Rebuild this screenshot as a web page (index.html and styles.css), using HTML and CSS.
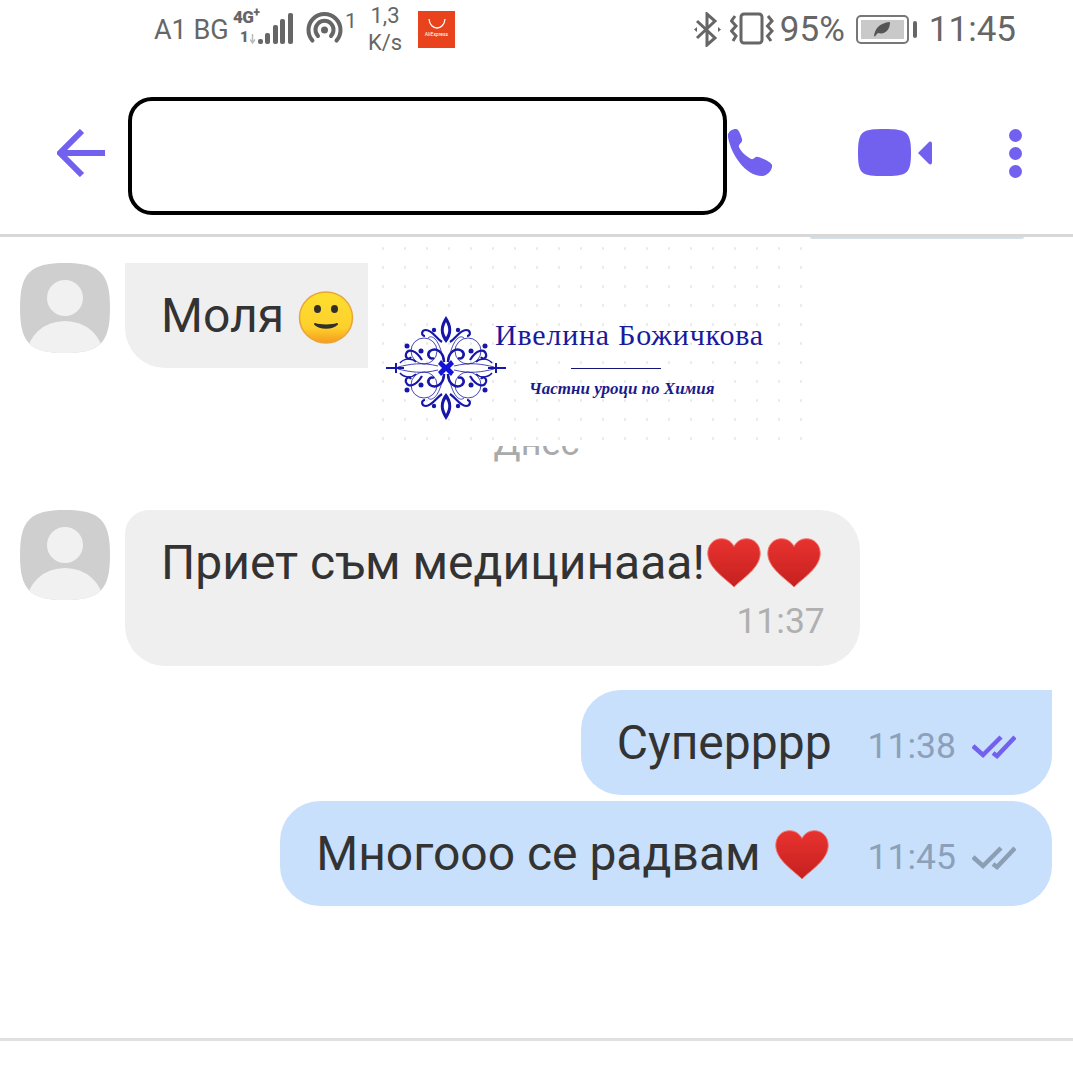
FILE: index.html
```html
<!DOCTYPE html>
<html lang="bg">
<head>
    <meta charset="UTF-8">
    <meta name="viewport" content="width=device-width, initial-scale=1.0">
    <title>Chat</title>
    <link rel="stylesheet" href="styles.css">
</head>
<body>
    <svg class="defs" width="0" height="0">
        <defs>
            <linearGradient id="heartFill" x1="0" y1="0" x2="0" y2="1">
                <stop offset="0" stop-color="#e8332f"/>
                <stop offset="1" stop-color="#c5201f"/>
            </linearGradient>
            <linearGradient id="smileFill" x1="0" y1="0" x2="0" y2="1">
                <stop offset="0" stop-color="#fde02f"/>
                <stop offset="0.7" stop-color="#fdd02c"/>
                <stop offset="1" stop-color="#f79a1f"/>
            </linearGradient>
            <symbol id="heart" viewBox="0 0 54 50">
                <path d="M27 49C18 40 1 30 .8 15.500C.7 6.500 7 .7 14.500.7C20 .7 24.500 3.500 27 8.500C29.500 3.500 34 .7 39.500.7C47 .7 53.300 6.500 53.200 15.500C53 30 36 40 27 49Z" fill="url(#heartFill)" stroke="#f2746c" stroke-width="1"/>
            </symbol>
            <symbol id="ticks" viewBox="0 0 44 24">
                <path d="M1 11L11 20L29 2M21 18L25 21L43 2" fill="none" stroke="currentColor" stroke-width="4.500"/>
            </symbol>
            <symbol id="avatar" viewBox="0 0 90 90">
                <clipPath id="avatarClip">
                    <path d="M45 0C80 0 90 10 90 45S80 90 45 90S0 80 0 45S10 0 45 0Z"/>
                </clipPath>
                <g clip-path="url(#avatarClip)">
                    <rect width="90" height="90" fill="#cfcfcf"/>
                    <circle cx="45" cy="35" r="18" fill="#f1f1f1"/>
                    <ellipse cx="45" cy="92" rx="38" ry="34" fill="#f1f1f1"/>
                </g>
            </symbol>
            <g id="scrolls" fill="none" stroke="#1616a8">
                <path d="M2 -6C2 -16 10 -21 16 -17C20 -13 16 -8 12 -10" stroke-width="2.500"/>
                <circle cx="22" cy="-17" r="13" stroke-width=".8"/>
                <path d="M3 -8C6 -28 14 -34 18 -30" stroke-width=".8"/>
                <path d="M4 -26C10 -30 14 -38 20 -38C25 -38 25 -32 21 -32" stroke-width="2.200"/>
                <path d="M24 -8C30 -18 38 -20 40 -14C41 -10 37 -8 35 -11" stroke-width="2.200"/>
                <path d="M8 -2C24 -6 36 -4 48 -1" stroke-width=".8"/>
                <path d="M30 -6C34 -10 42 -10 46 -5" stroke-width="1.500"/>
                <circle cx="12" cy="-38" r="2.200" fill="#1616a8" stroke="none"/>
                <circle cx="39" cy="-22" r="2.500" fill="#1616a8" stroke="none"/>
                <circle cx="25" cy="-17" r="2.500" fill="#1616a8" stroke="none"/>
            </g>
        </defs>
    </svg>

    <div class="status-bar">
        <div class="status-group">
            <span class="carrier">A1 BG</span>
            <div class="signal">
                <span class="net-type">4G<sup>+</sup></span>
                <span class="sim-no">1</span>
                <svg class="signal-bars" width="43" height="32" viewBox="0 0 43 32">
                    <path d="M2.500 21V29M0 26.500L2.500 30L5 26.500" fill="none" stroke="#bbb" stroke-width="1.500"/>
                    <rect x="8" y="26" width="5" height="5" rx="2" fill="#666"/>
                    <rect x="15" y="20" width="5" height="11" rx="2" fill="#666"/>
                    <rect x="23" y="12" width="5" height="19" rx="2" fill="#666"/>
                    <rect x="30" y="6" width="5" height="25" rx="2" fill="#666"/>
                    <rect x="38" y="0" width="5" height="31" rx="2" fill="#666"/>
                </svg>
            </div>
            <svg class="hotspot" width="37" height="32" viewBox="0 0 37 32">
                <circle cx="18.500" cy="18" r="3.500" fill="#666"/>
                <path d="M12 24A9 9 0 1 1 25 24M6.500 28.600A16 16 0 1 1 30.500 28.600" fill="none" stroke="#666" stroke-width="4" stroke-linecap="round"/>
            </svg>
            <span class="hotspot-count">1</span>
            <span class="speed">1,3<br>K/s</span>
            <div class="ali-icon">
                <svg width="20" height="12" viewBox="0 0 20 12">
                    <path d="M2 1C3 13 17 13 18 1" fill="none" stroke="#fff" stroke-width="1.300"/>
                </svg>
                <span class="ali-name">AliExpress</span>
            </div>
        </div>
        <div class="status-group status-right">
            <svg class="bluetooth" width="27" height="35" viewBox="0 0 27 35">
                <path d="M3 9L21 26L13 33V2L21 9L3 26" fill="none" stroke="#666" stroke-width="3"/>
                <path d="M0 17.500L3 15V20ZM27 17.500L24 15V20Z" fill="#666"/>
            </svg>
            <svg class="vibrate" width="44" height="33" viewBox="0 0 44 33">
                <rect x="11" y="2" width="21" height="29" rx="3" fill="none" stroke="#666" stroke-width="3"/>
                <path d="M5 4L1.500 9L6 14L1.500 19L6 24L3 29M38 4L42 9L37.500 14L42 19L37.500 24L41 29" fill="none" stroke="#666" stroke-width="3"/>
            </svg>
            <span class="status-text battery-pct">95%</span>
            <div class="battery">
                <div class="battery-body">
                    <svg width="18" height="16" viewBox="0 0 18 16">
                        <path d="M1 15C2 8 6 2 17 1C17 9 12 14 5 12C4 13 3 14 2 15.500Z" fill="#555"/>
                    </svg>
                </div>
                <div class="battery-cap"></div>
            </div>
            <span class="status-text">11:45</span>
        </div>
    </div>

    <div class="toolbar">
        <svg class="back-icon" width="48" height="48" viewBox="0 0 48 48">
            <path d="M25 2L3 24L25 46M3 24H48" fill="none" stroke="#7260ee" stroke-width="6"/>
        </svg>
        <div class="name-box"></div>
        <svg class="call-icon" width="47" height="48" viewBox="0 0 47 48">
            <path d="M2 8C1 3 6 0 10 0C13 0 15 7 16 10C17 14 12 15 13 18C15 23 20 27 25 30C28 31 29 27 32 28C36 29 45 33 46 36C47 40 42 47 36 47C20 47 5 26 2 8Z" fill="#7260ee"/>
        </svg>
        <svg class="video-icon" width="74" height="48" viewBox="0 0 74 48">
            <path d="M26 0C48 0 53 2 53 24S48 47 26 47S0 46 0 24S4 0 26 0Z" fill="#7260ee"/>
            <path d="M60 24L71 13C73 12 74 13 74 15V33C74 35 73 36 71 35Z" fill="#7260ee"/>
        </svg>
        <div class="more-icon">
            <span class="dot"></span>
            <span class="dot"></span>
            <span class="dot"></span>
        </div>
    </div>

    <div class="chat">
        <div class="peek-bubble"></div>

        <div class="msg-row row-first">
            <svg class="avatar" width="90" height="90"><use href="#avatar"/></svg>
            <div class="bubble bubble-in bubble-first">
                <span class="msg-text">Моля</span>
                <svg class="smile" width="56" height="53" viewBox="0 0 56 53">
                    <ellipse cx="28" cy="26.500" rx="26.500" ry="25.500" fill="url(#smileFill)" stroke="#e9a53a" stroke-width="1.500"/>
                    <ellipse cx="19.500" cy="18" rx="3.500" ry="4" fill="#33302a"/>
                    <ellipse cx="36.500" cy="18" rx="3.500" ry="4" fill="#33302a"/>
                    <path d="M17 33C22 38 34 38 39 33C34 35 22 35 17 33Z" fill="#33302a" stroke="#33302a" stroke-width="2" stroke-linejoin="round"/>
                </svg>
            </div>
        </div>

        <div class="date-label">Днес</div>

        <div class="msg-row">
            <svg class="avatar" width="90" height="90"><use href="#avatar"/></svg>
            <div class="bubble bubble-in bubble-tall">
                <div class="bubble-line">
                    <span class="msg-text">Приет съм медицинааа!</span>
                    <svg class="heart" width="54" height="50"><use href="#heart"/></svg>
                    <svg class="heart heart-next" width="54" height="50"><use href="#heart"/></svg>
                </div>
                <div class="msg-time time-in">11:37</div>
            </div>
        </div>

        <div class="sent-row row-gap">
            <div class="bubble bubble-out corner-sharp-right">
                <span class="msg-text">Суперррр</span>
                <span class="msg-time time-out">11:38</span>
                <svg class="tick tick-read" width="44" height="24"><use href="#ticks"/></svg>
            </div>
        </div>

        <div class="sent-row">
            <div class="bubble bubble-out">
                <span class="msg-text">Многооо се радвам</span>
                <svg class="heart heart-inline" width="54" height="50"><use href="#heart"/></svg>
                <span class="msg-time time-out">11:45</span>
                <svg class="tick" width="44" height="24"><use href="#ticks"/></svg>
            </div>
        </div>

        <div class="logo-stamp">
            <svg class="logo-ornament" width="120" height="104" viewBox="-60 -52 120 104">
                <use href="#scrolls"/>
                <use href="#scrolls" transform="scale(-1,1)"/>
                <use href="#scrolls" transform="scale(1,-1)"/>
                <use href="#scrolls" transform="scale(-1,-1)"/>
                <path d="M0 -52C-7 -42 -7 -34 0 -25C7 -34 7 -42 0 -52ZM0 -46C-3 -40 -3 -36 0 -31C3 -36 3 -40 0 -46Z" fill="#1616a8" fill-rule="evenodd"/>
                <path d="M0 52C-7 42 -7 34 0 25C7 34 7 42 0 52ZM0 46C-3 40 -3 36 0 31C3 36 3 40 0 46Z" fill="#1616a8" fill-rule="evenodd"/>
                <path d="M-60 0H-42M60 0H42M-50 -5V5M50 -5V5" fill="none" stroke="#1616a8" stroke-width="2"/>
                <path d="M0 -3L5 -8L8 -4L4 0L8 4L5 8L0 3L-5 8L-8 4L-4 0L-8 -4L-5 -8Z" fill="#1212d8"/>
            </svg>
            <div class="logo-name">Ивелина Божичкова</div>
            <div class="logo-rule"></div>
            <div class="logo-tagline">Частни уроци по Химия</div>
        </div>
    </div>

    <div class="composer"></div>
</body>
</html>
```

FILE: styles.css
```css
body {
    font-family: 'Roboto', sans-serif;
    margin: 0;
    padding: 0;
    background: #ffffff;
    color: #333;
    overflow: hidden;
}

.defs {
    position: absolute;
}

.status-bar {
    height: 60px;
    display: flex;
    justify-content: space-between;
    padding: 0 57px 0 154px;
    color: #666;
}

.status-group {
    display: flex;
    align-items: center;
}

.carrier {
    font-size: 27px;
    width: 79px;
    margin-bottom: 1px;
}

.signal {
    position: relative;
    width: 60px;
    height: 36px;
    margin-bottom: 2px;
}

.net-type {
    position: absolute;
    left: 0;
    top: -2px;
    font-size: 17px;
    font-weight: 900;
    letter-spacing: -0.5px;
    line-height: 17px;
}

.net-type sup {
    font-size: 12px;
    line-height: 0;
}

.sim-no {
    position: absolute;
    left: 7px;
    top: 18px;
    font-size: 15px;
    font-weight: 900;
    line-height: 17px;
}

.signal-bars {
    position: absolute;
    right: 0;
    top: 2px;
}

.hotspot {
    margin-left: 13px;
    margin-bottom: 4px;
}

.hotspot-count {
    font-size: 21px;
    width: 15px;
    margin: 0 0 18px 2px;
}

.speed {
    font-size: 22px;
    line-height: 27px;
    text-align: center;
    margin-left: 6px;
    width: 38px;
    margin-bottom: 3px;
}

.ali-icon {
    width: 37px;
    height: 37px;
    margin-left: 14px;
    margin-bottom: 1px;
    background: #e8431c;
    display: flex;
    flex-direction: column;
    align-items: center;
    padding-top: 7px;
    box-sizing: border-box;
}

.ali-name {
    font-size: 5px;
    color: #fff;
    line-height: 9px;
}

.bluetooth {
    margin-bottom: 2px;
}

.vibrate {
    margin: 0 6px 4px 9px;
}

.status-text {
    font-size: 35px;
    margin-bottom: 2px;
}

.battery-pct {
    margin-right: 11px;
}

.battery {
    display: flex;
    align-items: center;
    width: 61px;
    margin-right: 12px;
    margin-bottom: 2px;
}

.battery-body {
    width: 53px;
    height: 29px;
    border: 2px solid #777;
    border-radius: 5px;
    box-sizing: border-box;
    background: #c9c9c9;
    background-clip: content-box;
    padding: 3px;
    display: flex;
    align-items: center;
    justify-content: center;
}

.battery-cap {
    width: 4px;
    height: 17px;
    margin-left: 4px;
    background: #666;
    border-radius: 2px;
}

.toolbar {
    height: 174px;
    box-sizing: border-box;
    padding: 18px 49px 0 57px;
    display: flex;
    align-items: center;
}

.toolbar svg,
.more-icon {
    margin-bottom: 6px;
    flex-shrink: 0;
}

.name-box {
    width: 599px;
    height: 118px;
    margin-left: 23px;
    box-sizing: border-box;
    background: #fff;
    border: 4px solid #000;
    border-radius: 24px;
}

.call-icon {
    margin-left: -1px;
}

.video-icon {
    margin-left: 85px;
}

.more-icon {
    margin-left: 76px;
    width: 16px;
    display: flex;
    flex-direction: column;
    gap: 5px;
}

.dot {
    width: 13px;
    height: 13px;
    margin-left: 1px;
    background: #7260ee;
    border-radius: 50%;
}

.chat {
    position: relative;
    height: 807px;
    box-sizing: border-box;
    border-top: 3px solid #d8d8d8;
    border-bottom: 3px solid #e0e0e0;
    overflow: hidden;
}

.peek-bubble {
    width: 214px;
    height: 2px;
    margin-left: 810px;
    background: #d3e0ea;
    border-radius: 0 0 12px 12px;
}

.msg-row {
    display: flex;
    align-items: flex-start;
    padding-left: 20px;
    gap: 15px;
}

.row-first {
    margin-top: 24px;
}

.avatar {
    flex-shrink: 0;
}

.bubble {
    display: flex;
    align-items: center;
    height: 105px;
    box-sizing: border-box;
    padding: 0 36px 0 36px;
    border-radius: 40px;
    white-space: nowrap;
}

.bubble-in {
    background: #efefef;
}

.bubble-out {
    background: #c8e0fb;
}

.bubble-first {
    border-top-left-radius: 0;
    padding-right: 70px;
}

.corner-sharp-right {
    border-top-right-radius: 0;
}

.bubble-tall {
    display: block;
    height: 156px;
    border-top-left-radius: 24px;
}

.bubble-line {
    display: flex;
    align-items: center;
    height: 105px;
    padding-right: 3px;
}

.msg-text {
    font-size: 48px;
    color: #333;
}

.smile {
    margin-left: 14px;
    margin-top: 4px;
}

.heart {
    margin-left: 2px;
}

.heart-next {
    margin-left: 6px;
}

.heart-inline {
    margin-left: 14px;
    margin-top: 3px;
}

.date-label {
    height: 142px;
    box-sizing: border-box;
    padding-top: 54px;
    font-size: 36px;
    line-height: 42px;
    color: #aaa;
    text-align: center;
}

.msg-time {
    font-size: 35.500px;
    line-height: 36px;
}

.time-in {
    color: #b0b0b0;
    text-align: right;
    margin: -12px -1px 0 0;
}

.time-out {
    color: #8ca1b9;
    margin: 7px 0 0 36px;
}

.heart-inline + .time-out {
    margin-left: 39px;
}

.sent-row {
    display: flex;
    justify-content: flex-end;
    padding-right: 21px;
    margin-top: 6px;
}

.row-gap {
    margin-top: 24px;
}

.tick {
    margin: 8px 0 0 16px;
    color: #8b9eb3;
}

.tick-read {
    color: #7260ee;
}

.logo-stamp {
    position: absolute;
    left: 368px;
    top: 1px;
    width: 440px;
    height: 208px;
    background-color: #fff;
    background-image: radial-gradient(circle, #e9e9e9 1px, transparent 1.5px);
    background-size: 22px 19px;
    background-position: 4px 1px;
}

.logo-ornament {
    position: absolute;
    left: 18px;
    top: 78px;
}

.logo-name {
    position: absolute;
    left: 127px;
    top: 80px;
    font-family: 'Liberation Serif', serif;
    font-size: 30px;
    letter-spacing: 0.8px;
    color: #1a1a9c;
    white-space: nowrap;
}

.logo-rule {
    position: absolute;
    left: 203px;
    top: 130px;
    width: 90px;
    height: 1px;
    background: #14147a;
}

.logo-tagline {
    position: absolute;
    left: 161px;
    top: 141px;
    font-family: 'Liberation Serif', serif;
    font-size: 17px;
    font-style: italic;
    font-weight: bold;
    color: #1a1a8c;
    white-space: nowrap;
}

.composer {
    height: 32px;
}
```
